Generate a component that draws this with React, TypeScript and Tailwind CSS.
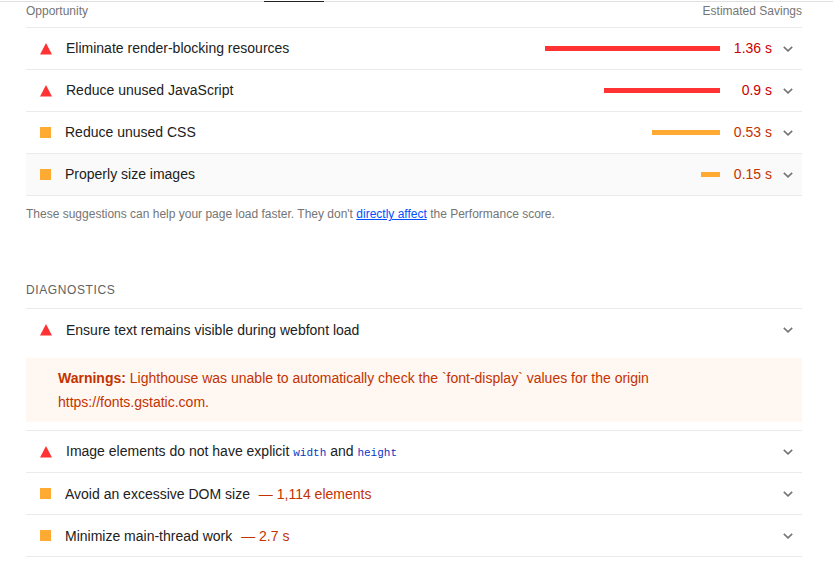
import { ReactNode } from "react";
import clsx from "clsx";

type Severity = "fail" | "average";

interface Opportunity {
  title: string;
  severity: Severity;
  seconds: number;
  hovered?: boolean;
}

// Seconds of savings that fill the whole sparkline
const SPARKLINE_MAX = 1.36;

const opportunities: Opportunity[] = [
  { title: "Eliminate render-blocking resources", severity: "fail", seconds: 1.36 },
  { title: "Reduce unused JavaScript", severity: "fail", seconds: 0.9 },
  { title: "Reduce unused CSS", severity: "average", seconds: 0.53 },
  { title: "Properly size images", severity: "average", seconds: 0.15, hovered: true },
];

function SeverityIcon({ severity }: { severity: Severity }) {
  if (severity === "fail") {
    return (
      <svg width="12" height="12" viewBox="0 0 12 12" className="mr-[14px] shrink-0" aria-hidden="true">
        <path d="M6 0L12 11.5H0z" fill="#ff3333" />
      </svg>
    );
  }
  return <span className="mr-[14px] size-[11px] shrink-0 bg-[#ffaa33]" />;
}

function Chevron() {
  return (
    <svg width="10" height="6" viewBox="0 0 10 6" className="mr-[9px] ml-[11px] shrink-0" aria-hidden="true">
      <path d="M0.8 0.8L5 4.8L9.2 0.8" fill="none" stroke="#757575" strokeWidth="1.6" />
    </svg>
  );
}

interface AuditRowProps {
  severity: Severity;
  title: ReactNode;
  hovered?: boolean;
  children?: ReactNode;
}

function AuditRow({ severity, title, hovered, children }: AuditRowProps) {
  return (
    <button
      type="button"
      className={clsx(
        "flex h-[41px] w-full items-center pl-[14px] text-left text-[14px] text-[#212121] hover:bg-[#fafafa]",
        hovered && "bg-[#fafafa]"
      )}
    >
      <SeverityIcon severity={severity} />
      <span className="grow">{title}</span>
      {children}
      <Chevron />
    </button>
  );
}

function Savings({ severity, seconds }: { severity: Severity; seconds: number }) {
  return (
    <>
      <span className="flex w-[175px] justify-end">
        <span
          className={clsx("h-[5px]", severity === "fail" ? "bg-[#ff3333]" : "bg-[#ffaa33]")}
          style={{ width: `${(seconds / SPARKLINE_MAX) * 100}%` }}
        />
      </span>
      <span className={clsx("w-13 text-right", severity === "fail" ? "text-[#cc0000]" : "text-[#c33300]")}>
        {seconds} s
      </span>
    </>
  );
}

function Code({ children }: { children: ReactNode }) {
  return (
    <code className="font-['Liberation_Mono',monospace] text-[11px] text-[#0938c2]">
      {children}
    </code>
  );
}

function DisplayValue({ children }: { children: ReactNode }) {
  return <span className="ml-[5px] text-[#c33300]">— {children}</span>;
}

export default function App() {
  return (
    <div className="bg-white font-['Liberation_Sans',Arial,sans-serif] text-[#212121]">
      {/* Bottom edge of the tab bar */}
      <div className="flex pt-px">
        <div className="h-px w-[264px] bg-[#e0e0e0]" />
        <div className="h-px w-15 bg-[#212121]" />
        <div className="h-px grow bg-[#e0e0e0]" />
      </div>

      <main className="pr-[31px] pl-[26px]">
        <section>
          <div className="flex justify-between pb-[7px] text-xs leading-[18px] text-[#757575]">
            <span>Opportunity</span>
            <span>Estimated Savings</span>
          </div>
          <ul className="divide-y divide-[#ebebeb] border-y border-[#ebebeb] leading-[21px]">
            {opportunities.map((item) => (
              <li key={item.title}>
                <AuditRow severity={item.severity} title={item.title} hovered={item.hovered}>
                  <Savings severity={item.severity} seconds={item.seconds} />
                </AuditRow>
              </li>
            ))}
          </ul>
          <p className="pt-[9px] text-xs leading-[18px] text-[#757575]">
            These suggestions can help your page load faster. They don't{" "}
            <a href="#performance" className="text-[#0050ff] underline">
              directly affect
            </a>{" "}
            the Performance score.
          </p>
        </section>

        <section className="pt-[58px]">
          <h2 className="pb-[9px] text-xs leading-[18px] tracking-wider text-[#616161]">DIAGNOSTICS</h2>
          <ul className="divide-y divide-[#ebebeb] border-y border-[#ebebeb] leading-5">
            <li>
              <AuditRow severity="fail" title="Ensure text remains visible during webfont load" />
              <div className="my-2 bg-[#fff7f2] px-8 py-2 text-[14px] leading-6 text-[#c33300]">
                <p className="max-w-[620px]">
                  <strong>Warnings:</strong> Lighthouse was unable to automatically check the `font-display` values
                  for the origin https://fonts.gstatic.com.
                </p>
              </div>
            </li>
            <li>
              <AuditRow
                severity="fail"
                title={
                  <>
                    Image elements do not have explicit <Code>width</Code> and <Code>height</Code>
                  </>
                }
              />
            </li>
            <li>
              <AuditRow
                severity="average"
                title={
                  <>
                    Avoid an excessive DOM size <DisplayValue>1,114 elements</DisplayValue>
                  </>
                }
              />
            </li>
            <li>
              <AuditRow
                severity="average"
                title={
                  <>
                    Minimize main-thread work <DisplayValue>2.7 s</DisplayValue>
                  </>
                }
              />
            </li>
          </ul>
        </section>
      </main>
    </div>
  );
}
